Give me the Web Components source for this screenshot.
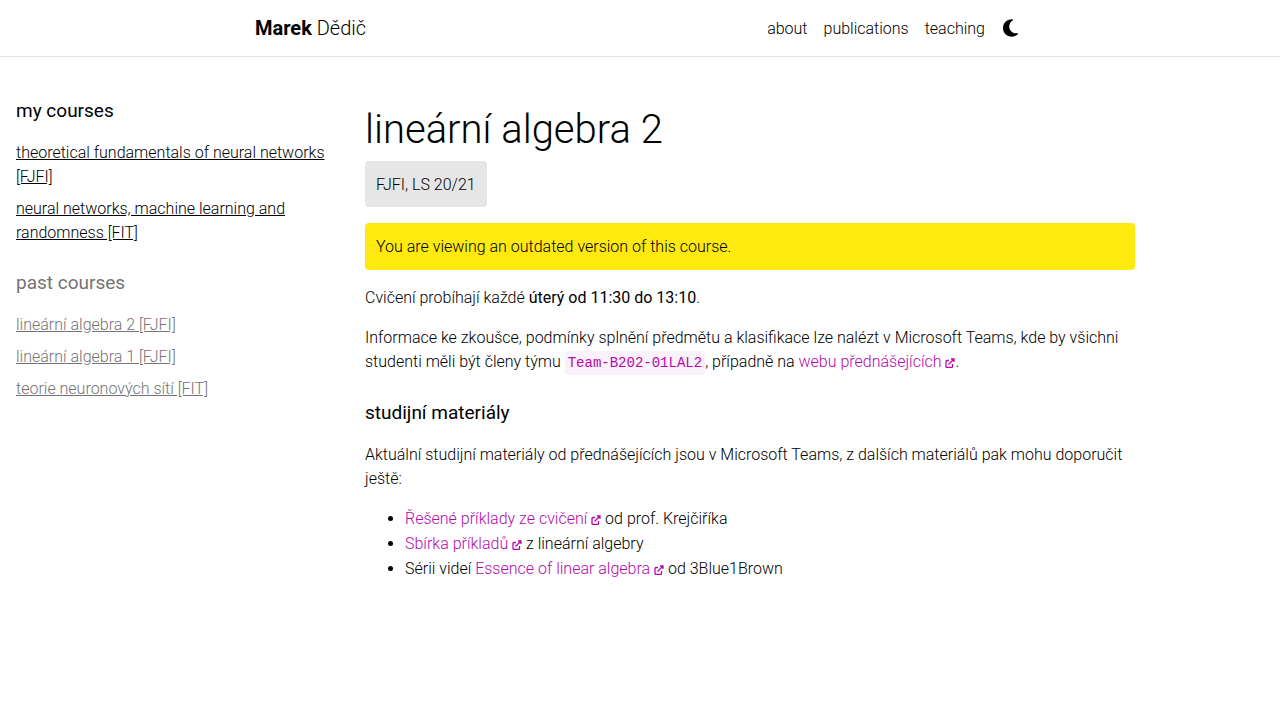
<!DOCTYPE html>
<html lang="cs">
<head>
<meta charset="utf-8">
<meta name="viewport" content="width=device-width, initial-scale=1">
<title>lineární algebra 2 | Marek Dědič</title>
<style>
  body { margin: 0; background: #fff; color: #000; font: 300 16px/24px Roboto, "Liberation Sans", sans-serif; }
</style>
</head>
<body>
<course-page></course-page>

<script>
const define = (name, html, setup) => {
  const template = document.createElement("template");
  template.innerHTML = html;
  customElements.define(name, class extends HTMLElement {
    connectedCallback() {
      if (this.shadowRoot) return;
      this.attachShadow({ mode: "open" }).append(template.content.cloneNode(true));
      if (setup) setup(this, this.shadowRoot);
    }
  });
};

define("theme-toggle", `
<style>
  :host { display: flex; }
  button { display: flex; padding: 0 7px 0 10px; border: 0; background: none; color: inherit; cursor: pointer; }
  svg { display: block; width: 15px; height: 20px; }
</style>
<button type="button" aria-label="Toggle theme">
  <svg viewBox="0 0 384 512" fill="currentColor" aria-hidden="true"><path d="M223.5 32C100 32 0 132.3 0 256S100 480 223.5 480c60.6 0 115.5-24.2 155.8-63.4c5-4.9 6.3-12.5 3.1-18.7s-10.1-9.7-17-8.5c-9.8 1.7-19.8 2.6-30.1 2.6c-96.9 0-175.5-78.8-175.5-176c0-65.8 36-123.1 89.3-153.3c6.1-3.5 9.2-10.5 7.7-17.3s-7.3-11.9-14.3-12.5c-6.3-.5-12.6-.8-19-.8z"/></svg>
</button>`);

define("nav-bar", `
<style>
  :host { display: block; border-bottom: 1px solid rgba(0, 0, 0, .1); }
  .inner { display: flex; align-items: center; justify-content: space-between; box-sizing: border-box; max-width: 800px; min-height: 56px; margin: 0 auto; padding: 0 15px; }
  .brand { font-size: 20px; line-height: 30px; }
  .brand b { font-weight: 700; }
  a { color: inherit; text-decoration: none; }
  nav { display: flex; align-items: center; }
  nav a { padding: 2px 8px 0; }
</style>
<header class="inner">
  <a class="brand" href="#"><b>Marek</b> Dědič</a>
  <nav>
    <a href="#about">about</a>
    <a href="#publications">publications</a>
    <a href="#teaching">teaching</a>
    <theme-toggle></theme-toggle>
  </nav>
</header>`);

define("course-group", `
<style>
  :host { display: block; }
  :host([past]) { color: #737373; }
  h2 { margin: 0 0 16px; font-size: 19px; line-height: 28px; font-weight: 400; }
  div { display: grid; gap: 8px; }
</style>
<section><h2></h2><div><slot></slot></div></section>`,
(host, root) => { root.querySelector("h2").textContent = host.getAttribute("heading"); });

define("course-link", `
<style>
  :host { display: block; }
  a { color: inherit; text-decoration: underline; }
</style>
<a href="#course"><slot></slot></a>`);

define("side-bar", `
<style>
  :host { display: grid; align-content: start; gap: 24px; padding: 0 16px; }
</style>
<course-group heading="my courses">
  <course-link>theoretical fundamentals of neural networks [FJFI]</course-link>
  <course-link>neural networks, machine learning and randomness [FIT]</course-link>
</course-group>
<course-group heading="past courses" past>
  <course-link>lineární algebra 2 [FJFI]</course-link>
  <course-link>lineární algebra 1 [FJFI]</course-link>
  <course-link>teorie neuronových sítí [FIT]</course-link>
</course-group>`);

define("external-link", `
<style>
  :host { display: inline; }
  a { color: #b509ac; text-decoration: none; }
  svg { width: 10px; height: 10px; vertical-align: -1px; }
</style>
<a href="#external"><slot></slot> <svg viewBox="0 0 20 20" fill="none" stroke="currentColor" stroke-width="2.6" aria-hidden="true"><path d="M8 5H4Q2 5 2 7V17Q2 19 4 19H13Q15 19 15 17V12M7 13L18 2M12 2H18V8"/></svg></a>`);

define("info-box", `
<style>
  :host { display: block; width: fit-content; box-sizing: border-box; padding: 12px 11px 10px; border-radius: 4px; background: #e6e6e6; color: #000; }
  :host([kind="warning"]) { width: auto; padding-bottom: 11px; background: #ffea0f; }
</style>
<slot></slot>`);

define("course-article", `
<style>
  :host { display: block; padding: 0 15px; }
  h1 { margin: 0 0 7px; font-size: 40px; line-height: 48px; font-weight: 300; }
  h2 { margin: 25px 0 16px; font-size: 19px; line-height: 28px; font-weight: 400; }
  .meta { display: grid; gap: 16px; margin-bottom: 16px; }
  p, ul { margin: 0 0 16px; }
  ul { display: grid; gap: 1px; padding-left: 40px; }
  strong { font-weight: 400; }
  code { padding: 4px 3px; border-radius: 3px; background: #f9f2fa; color: #b509ac; font: 14px/20px "Liberation Mono", monospace; }
</style>
<article>
  <h1>lineární algebra 2</h1>
  <div class="meta">
    <info-box>FJFI, LS 20/21</info-box>
    <info-box kind="warning">You are viewing an outdated version of this course.</info-box>
  </div>
  <p>Cvičení probíhají každé <strong>úterý od 11:30 do 13:10</strong>.</p>
  <p>Informace ke zkoušce, podmínky splnění předmětu a klasifikace lze nalézt v Microsoft Teams, kde by všichni studenti měli být členy týmu <code>Team-B202-01LAL2</code>, případně na <external-link>webu přednášejících</external-link>.</p>
  <h2>studijní materiály</h2>
  <p>Aktuální studijní materiály od přednášejících jsou v Microsoft Teams, z dalších materiálů pak mohu doporučit ještě:</p>
  <ul>
    <li><external-link>Řešené příklady ze cvičení</external-link> od prof. Krejčiříka</li>
    <li><external-link>Sbírka příkladů</external-link> z lineární algebry</li>
    <li>Sérii videí <external-link>Essence of linear algebra</external-link> od 3Blue1Brown</li>
  </ul>
</article>`);

define("course-page", `
<style>
  :host { display: block; }
  .layout { display: grid; grid-template-columns: minmax(0, 350px) minmax(0, 800px); padding-top: 40px; }
  side-bar { grid-column: 1; }
  main { padding-top: 9px; }
</style>
<nav-bar></nav-bar>
<div class="layout">
  <side-bar></side-bar>
  <main><course-article></course-article></main>
</div>`);
</script>
</body>
</html>
